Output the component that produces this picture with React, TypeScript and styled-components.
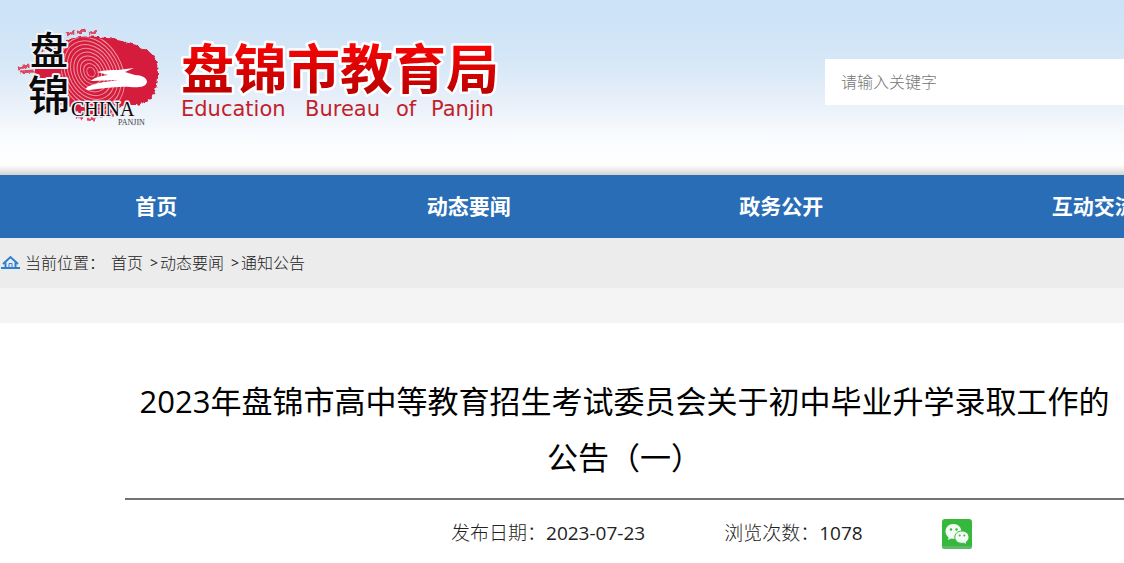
import React from "react";
import styled, { createGlobalStyle } from "styled-components";

const Global = createGlobalStyle`
  * { box-sizing: border-box; }
  body {
    margin: 0;
    background: #fff;
    overflow-x: hidden;
    font-family: "Open Sans", "Noto Sans CJK SC", sans-serif;
    color: #333;
  }
  a { color: inherit; text-decoration: none; }
`;

const Header = styled.header`
  display: flex;
  justify-content: space-between;
  align-items: flex-start;
  height: 175px;
  background:
    linear-gradient(#ffffff, #f0efee 40%, #d2d2d2) bottom / 100% 10px no-repeat,
    linear-gradient(#cbe2f8, #d5e7f7 60px, #e8eff9 100px, #f8fbfe 135px, #ffffff 165px);
`;

const LogoLink = styled.a`
  display: block;
  flex: none;
`;

const LogoArt = styled.svg`
  display: block;
`;

const Search = styled.form`
  width: 299px;
  margin-top: 59px;
`;

const SearchInput = styled.input`
  display: block;
  width: 100%;
  height: 46px;
  padding: 0 16px;
  border: 0;
  border-radius: 0;
  background: #fff;
  font: 300 16px "Open Sans", "Noto Sans CJK SC", sans-serif;
  color: #333;
  outline: none;
  &::placeholder { color: #757575; opacity: 1; }
`;

const Nav = styled.nav`
  display: flex;
  height: 63px;
  overflow: hidden;
  background: #296db7;
`;

const NavLink = styled.a`
  flex: 0 0 27.8%;
  text-align: center;
  line-height: 63px;
  font-size: 21px;
  font-weight: 700;
  color: #fff;
`;

const Crumbs = styled.nav`
  display: flex;
  align-items: center;
  height: 50px;
  padding: 0 0 2px 1px;
  background: #ececec;
  font-size: 16px;
  font-weight: 300;
  color: #222;
  white-space: pre;
`;

const HomeIcon = styled.svg`
  flex: none;
  margin-right: 5px;
`;

const CrumbLabel = styled.span`
  margin-right: 6px;
`;

const CrumbMark = styled.span`
  padding: 0 2px 0 7px;
  font-size: 14px;
  font-weight: 400;
`;

const Band = styled.div`
  height: 35px;
  background: #f4f4f4;
`;

const Article = styled.main`
  margin-left: 125px;
  padding-top: 50px;
`;

const Title = styled.h1`
  margin: 0;
  padding-bottom: 13px;
  border-bottom: 2px solid #727272;
  text-align: center;
  font-size: 31px;
  font-weight: 400;
  line-height: 56px;
  color: #000;
  white-space: nowrap;
`;

const Meta = styled.div`
  display: flex;
  align-items: center;
  gap: 79px;
  height: 68px;
  padding-left: 326px;
  font-size: 19px;
  font-weight: 300;
  line-height: 24px;
  color: #222;
  white-space: nowrap;
`;

const MetaItem = styled.span`
  padding-bottom: 2px;
`;

const Figures = styled.span`
  font-weight: 400;
`;

const ShareButton = styled.button`
  display: block;
  width: 30px;
  height: 30px;
  padding: 0;
  border: 0;
  background: none;
  cursor: pointer;
`;

const rings = [5, 9, 13, 17, 21, 25, 29, 33, 37, 41];

function Logo() {
  return (
    <LogoArt width="510" height="140" viewBox="0 0 510 140" role="img" aria-label="盘锦市教育局">
      <defs>
        <linearGradient id="red" x1="0" y1="0" x2="0" y2="1">
          <stop offset="0.2" stopColor="#f80505" />
          <stop offset="0.9" stopColor="#b80000" />
        </linearGradient>
        <filter id="rough" x="-10%" y="-10%" width="120%" height="120%">
          <feTurbulence type="fractalNoise" baseFrequency="0.22" numOctaves="2" seed="4" />
          <feDisplacementMap in="SourceGraphic" scale="5" xChannelSelector="R" yChannelSelector="G" />
        </filter>
        <clipPath id="body">
          <path d="M64 42 C78 35 98 37 117 42 C134 44 148 50 152 63 C156 76 153 90 145 97 C134 105 120 103 110 115 C98 120 82 116 74 107 C62 98 59 80 62 66 Z" />
        </clipPath>
      </defs>
      <g filter="url(#rough)">
        <path d="M62 43 C76 34 100 36 117 40 C132 43 151 48 156 60 C160 76 158 90 150 99 C139 109 122 102 112 113 C98 121 80 117 72 107 C48 104 38 90 34 74 C36 60 48 50 62 43 Z" fill="#d51d3c" />
        <path d="M66 35 L74 32 M77 32 L86 31 M90 33 L96 32 M18 68 L31 66 M20 72 L34 71 M37 53 L46 49 M76 117 L84 119 M88 119 L95 120 M106 116 L114 115" stroke="#dc4862" strokeWidth="3" />
      </g>
      <g clipPath="url(#body)" fill="none" stroke="#ee93a4" strokeWidth="1">
        {rings.map((r) => (
          <ellipse key={r} cx="91" cy="72" rx={r * 0.75} ry={r} transform="rotate(-30 91 72)" />
        ))}
      </g>
      <path d="M97 72 C105 70 112 70 118 70 L134 68 L125 72 L135 75 C142 75 147 78 147 82 C146 87 138 88 130 87 C115 86 102 89 89 90 C83 90 86 86 96 84 C103 81 111 82 118 80 L91 81 C96 76 103 76 108 75 Z" fill="#fff" />
      <g fill="#0b0808" stroke="#eef3fa" strokeWidth="4" strokeLinejoin="round" paintOrder="stroke">
        <g fontFamily="Noto Sans CJK SC" fontWeight="500">
          <text x="30" y="64" fontSize="38">盘</text>
          <text x="28" y="111" fontSize="42">锦</text>
        </g>
        <text x="71" y="116" fontFamily="Liberation Serif" fontSize="20" strokeWidth="3">CHINA</text>
        <text x="118" y="125" fontFamily="Liberation Serif" fontSize="8" fill="#444" strokeWidth="1">PANJIN</text>
      </g>
      <text x="181" y="89" fontFamily="Noto Sans CJK SC" fontWeight="700" fontSize="53" fill="url(#red)" stroke="#fff" strokeWidth="5" strokeLinejoin="round" paintOrder="stroke">盘锦市教育局</text>
      <g fontFamily="DejaVu Sans" fontSize="21" fill="#c11f2b">
        <text x="181" y="116">Education</text>
        <text x="305" y="116">Bureau</text>
        <text x="396" y="116">of</text>
        <text x="431" y="116">Panjin</text>
      </g>
    </LogoArt>
  );
}

export default function App() {
  return (
    <>
      <Global />
      <Header>
        <LogoLink href="#"><Logo /></LogoLink>
        <Search role="search">
          <SearchInput type="text" placeholder="请输入关键字" aria-label="请输入关键字" />
        </Search>
      </Header>
      <Nav>
        <NavLink href="#">首页</NavLink>
        <NavLink href="#">动态要闻</NavLink>
        <NavLink href="#">政务公开</NavLink>
        <NavLink href="#">互动交流</NavLink>
      </Nav>
      <Crumbs>
        <HomeIcon width="19" height="14" viewBox="0 0 19 14" fill="none" stroke="#2b80cf" strokeWidth="2">
          <path d="M2 9 L9.500 2 L17 9" />
          <path d="M4.500 7.500 V12 M14.500 7.500 V12" />
          <path d="M8 12 V8.500 H11 V12" strokeWidth="1" />
          <path d="M0 13 H19" />
        </HomeIcon>
        <CrumbLabel>当前位置：</CrumbLabel>
        <a href="#">首页</a>
        <CrumbMark>&gt;</CrumbMark>
        <a href="#">动态要闻</a>
        <CrumbMark>&gt;</CrumbMark>
        <a href="#">通知公告</a>
      </Crumbs>
      <Band />
      <Article>
        <Title>
          2023年盘锦市高中等教育招生考试委员会关于初中毕业升学录取工作的
          <br />
          公告（一）
        </Title>
        <Meta>
          <MetaItem>发布日期：<Figures>2023-07-23</Figures></MetaItem>
          <MetaItem>浏览次数：<Figures>1078</Figures></MetaItem>
          <ShareButton type="button" aria-label="微信">
            <svg width="30" height="30" viewBox="0 0 30 30">
              <rect width="30" height="30" rx="3" fill="#35b83c" />
              <path d="M0 27 H30 A3 3 0 0 1 27 30 H3 A3 3 0 0 1 0 27 Z" fill="#5fb865" />
              <path d="M11.500 5 C6.500 5 3.500 8.500 3.500 12.500 C3.500 15 4.800 17 6.500 18.300 L6 21 L9 19.600 C13 20.500 19.500 18.500 19.500 12.500 C19.500 8.500 16 5 11.500 5 Z" fill="#f4fbf4" />
              <path d="M20 12 C15.500 12 12.800 15 12.800 18.200 C12.800 22 16.500 25 21.500 24.200 L24.500 25.700 L24 23.300 C26 22 27 20 27 18.200 C27 15 24.300 12 20 12 Z" fill="#f4fbf4" stroke="#35b83c" strokeWidth="1" />
              <g fill="#35b83c">
                <circle cx="9" cy="10.500" r="1.200" />
                <circle cx="14.500" cy="10.500" r="1.200" />
                <circle cx="17.700" cy="16.500" r="1" />
                <circle cx="22.300" cy="16.500" r="1" />
              </g>
            </svg>
          </ShareButton>
        </Meta>
      </Article>
    </>
  );
}
